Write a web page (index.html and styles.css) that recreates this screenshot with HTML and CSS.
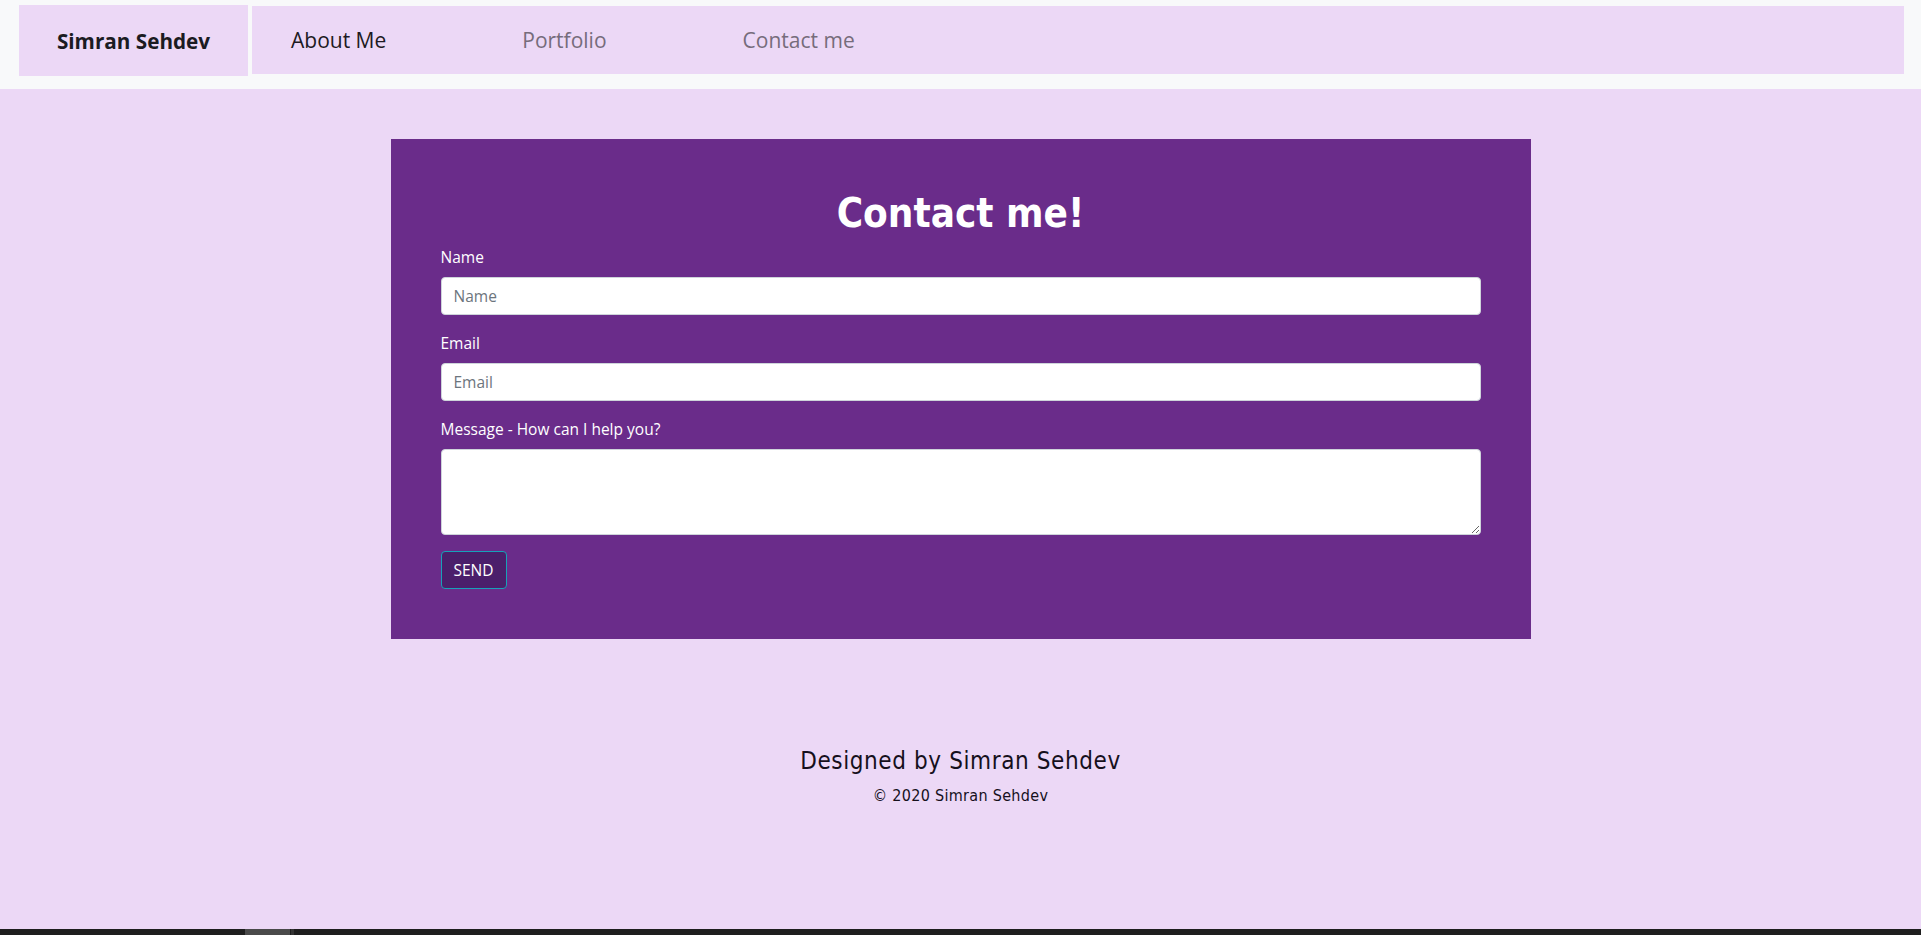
FILE: index.html
```html
<!DOCTYPE html>
<html lang="en">
<head>
<meta charset="utf-8">
<title>Contact me</title>
<link rel="stylesheet" href="styles.css">
</head>
<body>
<div class="page">
  <nav class="topbar">
    <a class="brand" href="#">Simran Sehdev</a>
    <div class="links">
      <a class="link active" href="#">About Me</a>
      <a class="link" href="#">Portfolio</a>
      <a class="link" href="#">Contact me</a>
    </div>
  </nav>

  <main class="main">
    <section class="card">
      <h1 class="title">Contact me!</h1>
      <form class="form">
        <div class="group">
          <label class="label" for="name">Name</label>
          <input class="control" id="name" type="text" placeholder="Name">
        </div>
        <div class="group">
          <label class="label" for="email">Email</label>
          <input class="control" id="email" type="email" placeholder="Email">
        </div>
        <div class="group">
          <label class="label" for="msg">Message - How can I help you?</label>
          <textarea class="control area" id="msg" rows="3"></textarea>
        </div>
        <button class="send" type="button">SEND</button>
      </form>
    </section>
  </main>

  <footer class="footer">
    <h4 class="designed">Designed by Simran Sehdev</h4>
    <p class="copy">© 2020 Simran Sehdev</p>
  </footer>

  <div class="hscroll"><span class="thumb"></span><span class="thumb-tail"></span></div>
</div>
</body>
</html>
```

FILE: styles.css
```css
* { box-sizing: border-box; }

html, body {
  margin: 0;
  padding: 0;
  height: 100%;
}

body {
  background: #ecd8f6;
  font-family: "Open Sans", "Noto Sans", sans-serif;
  color: #212529;
}

.page {
  min-height: 100vh;
  display: flex;
  flex-direction: column;
}

/* Top navigation */
.topbar {
  background: #f8f9fa;
  display: flex;
  align-items: flex-start;
  gap: 4px;
  padding: 5px 17px 13px 19px;
  height: 89px;
}

.brand {
  flex: 0 0 229px;
  height: 71px;
  background: #ecd8f6;
  display: flex;
  align-items: center;
  justify-content: center;
  font-weight: 700;
  font-size: 20.7px;
  color: #1b1b22;
  text-decoration: none;
}

.links {
  flex: 1;
  margin-top: 1px;
  height: 68px;
  background: #ecd8f6;
  display: flex;
  align-items: center;
  gap: 136px;
  padding-left: 39px;
}

.link {
  font-size: 21px;
  color: #766c7b;
  text-decoration: none;
}

.link.active {
  color: #1d1a22;
}

/* Main card */
.main {
  padding-top: 50px;
}

.card {
  width: 1140px;
  margin: 0 auto;
  background: #6a2c8a;
  padding: 50px;
  color: #fff;
}

.title {
  margin: 0 0 8px;
  text-align: center;
  font-family: "DejaVu Sans Condensed", "DejaVu Sans", sans-serif;
  font-stretch: condensed;
  font-weight: 700;
  font-size: 40px;
  line-height: 48px;
}

.group {
  margin-bottom: 16px;
}

.label {
  display: block;
  font-size: 15.5px;
  line-height: 24px;
  margin-bottom: 8px;
}

.control {
  display: block;
  width: 100%;
  height: 38px;
  padding: 6px 12px;
  font-family: "Open Sans", sans-serif;
  font-size: 15.5px;
  line-height: 24px;
  color: #495057;
  background: #fff;
  border: 1px solid #ced4da;
  border-radius: 4px;
}

.control::placeholder {
  color: #6c757d;
}

.area {
  height: 86px;
  resize: vertical;
}

.send {
  display: block;
  height: 38px;
  padding: 6px 12px;
  font-family: "Open Sans", sans-serif;
  font-size: 15.5px;
  line-height: 24px;
  color: #fff;
  background: #4b1f6b;
  border: 1px solid #17a2b8;
  border-radius: 4px;
}

/* Footer */
.footer {
  flex: 1;
  padding-top: 108px;
  text-align: center;
  font-family: "DejaVu Sans Condensed", "DejaVu Sans", sans-serif;
  font-stretch: condensed;
  color: #16101c;
}

.designed {
  margin: 0 0 8px;
  font-weight: 400;
  font-size: 24px;
  line-height: 28.8px;
  letter-spacing: 0.6px;
}

.copy {
  margin: 0;
  font-size: 16px;
  line-height: 24px;
  letter-spacing: 0.3px;
}

.hscroll {
  height: 6px;
  background: #1e1e1e;
  display: flex;
  padding-left: 245px;
}

.thumb {
  width: 45px;
  background: #4a4a4a;
}

.thumb-tail {
  width: 3px;
  margin-left: 1px;
  background: #333;
}
```
